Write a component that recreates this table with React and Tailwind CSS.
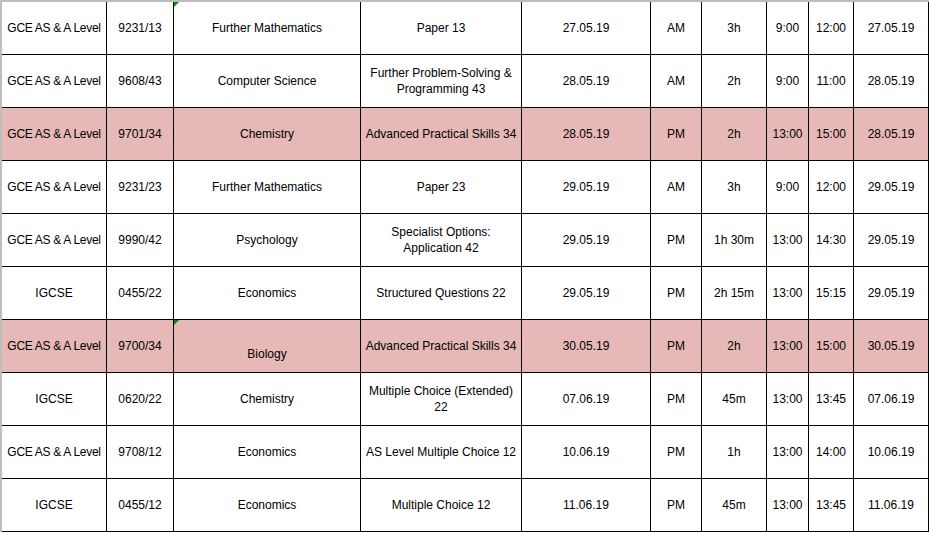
import React from 'react';

const rows = [
  { q: 'GCE AS & A Level', code: '9231/13', subject: 'Further Mathematics', paper: ['Paper 13'], date: '27.05.19', s: 'AM', dur: '3h', start: '9:00', end: '12:00', flag: true },
  { q: 'GCE AS & A Level', code: '9608/43', subject: 'Computer Science', paper: ['Further Problem-Solving &', 'Programming 43'], date: '28.05.19', s: 'AM', dur: '2h', start: '9:00', end: '11:00' },
  { q: 'GCE AS & A Level', code: '9701/34', subject: 'Chemistry', paper: ['Advanced Practical Skills 34'], date: '28.05.19', s: 'PM', dur: '2h', start: '13:00', end: '15:00', pink: true },
  { q: 'GCE AS & A Level', code: '9231/23', subject: 'Further Mathematics', paper: ['Paper 23'], date: '29.05.19', s: 'AM', dur: '3h', start: '9:00', end: '12:00' },
  { q: 'GCE AS & A Level', code: '9990/42', subject: 'Psychology', paper: ['Specialist Options:', 'Application 42'], date: '29.05.19', s: 'PM', dur: '1h 30m', start: '13:00', end: '14:30' },
  { q: 'IGCSE', code: '0455/22', subject: 'Economics', paper: ['Structured Questions 22'], date: '29.05.19', s: 'PM', dur: '2h 15m', start: '13:00', end: '15:15' },
  { q: 'GCE AS & A Level', code: '9700/34', subject: 'Biology', paper: ['Advanced Practical Skills 34'], date: '30.05.19', s: 'PM', dur: '2h', start: '13:00', end: '15:00', pink: true, flag: true, low: true },
  { q: 'IGCSE', code: '0620/22', subject: 'Chemistry', paper: ['Multiple Choice (Extended)', '22'], date: '07.06.19', s: 'PM', dur: '45m', start: '13:00', end: '13:45' },
  { q: 'GCE AS & A Level', code: '9708/12', subject: 'Economics', paper: ['AS Level Multiple Choice 12'], date: '10.06.19', s: 'PM', dur: '1h', start: '13:00', end: '14:00' },
  { q: 'IGCSE', code: '0455/12', subject: 'Economics', paper: ['Multiple Choice 12'], date: '11.06.19', s: 'PM', dur: '45m', start: '13:00', end: '13:45' },
];

const Cell = ({ children, className = '' }) => (
  <div className={`relative h-[53px] border-r border-b border-black flex items-center justify-center text-center leading-[16px] whitespace-nowrap ${className}`}>
    {children}
  </div>
);

const Flag = () => (
  <span className="absolute left-0 top-0 w-0 h-0 border-t-[5px] border-t-[#0a8a0a] border-r-[5px] border-r-transparent" />
);

export default function App() {
  return (
    <div className="w-[929px] h-[533px] overflow-hidden bg-white">
      <div
        className="border-l-2 border-t-2 border-[#bdbdbd] text-[12px] text-black grid grid-cols-[105px_67px_187px_161px_129px_51px_65px_42px_45px_75px]"
        style={{ fontFamily: '"Liberation Sans", Arial, sans-serif' }}
      >
        {rows.map((r, i) => {
          const bg = r.pink ? 'bg-[#e6b8b7]' : 'bg-white';
          return (
            <React.Fragment key={i}>
              <Cell className={`${bg} ${r.q.length > 6 ? 'tracking-[-0.3px]' : ''}`}>{r.q}</Cell>
              <Cell className={bg}>{r.code}</Cell>
              <Cell className={`${bg} ${r.low ? 'items-end pb-[10px]' : ''}`}>
                {r.flag && <Flag />}
                {r.subject}
              </Cell>
              <Cell className={bg}>
                <div className="flex flex-col">
                  {r.paper.map((line, j) => (
                    <span key={j}>{line}</span>
                  ))}
                </div>
              </Cell>
              <Cell className={bg}>{r.date}</Cell>
              <Cell className={bg}>{r.s}</Cell>
              <Cell className={bg}>{r.dur}</Cell>
              <Cell className={bg}>{r.start}</Cell>
              <Cell className={bg}>{r.end}</Cell>
              <Cell className={bg}>{r.date}</Cell>
            </React.Fragment>
          );
        })}
      </div>
    </div>
  );
}
